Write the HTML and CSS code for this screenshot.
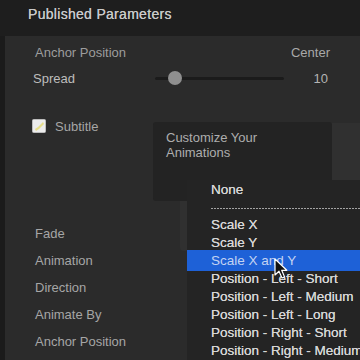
FILE: index.html
```html
<!DOCTYPE html>
<html lang="en">
<head>
  <meta charset="UTF-8" />
  <meta name="viewport" content="width=device-width, initial-scale=1" />
  <title>Published Parameters</title>
  <link rel="stylesheet" href="styles.css">
</head>
<body>
  <div class="panel">
    <header class="bar">
      <h1>Published Parameters</h1>
    </header>

    <main class="params">
      <div class="row">
        <span class="label dim">Anchor Position</span>
        <span class="value">Center</span>
      </div>
      <div class="row">
        <span class="label bright spread">Spread</span>
        <div class="slider"><span class="thumb"></span></div>
        <span class="value num">10</span>
      </div>
      <div class="row check-row">
        <svg class="check" width="14" height="14" viewBox="0 0 14 14">
          <rect x="0.5" y="0.5" width="13" height="13" rx="1" fill="#ececec" stroke="#bdbdbd" />
          <path d="M3 10 L6 8 L11 3 L12 5 L7 10 L4 12 Z" fill="#e4dc7a" opacity="0.85" />
        </svg>
        <span class="label">Subtitle</span>
      </div>

      <div class="group">
        <div class="row"><span class="label">Fade</span></div>
        <div class="row"><span class="label">Animation</span></div>
        <div class="row"><span class="label">Direction</span></div>
        <div class="row"><span class="label">Animate By</span></div>
        <div class="row"><span class="label">Anchor Position</span></div>
      </div>
    </main>

    <!-- popup button sitting under the tooltip and menu -->
    <div class="popup-bg"></div>

    <div class="tooltip">Customize Your<br>Animations</div>

    <ul class="menu">
      <li class="first">None</li>
      <li class="sep"></li>
      <li>Scale X</li>
      <li>Scale Y</li>
      <li class="active">Scale X and Y</li>
      <li>Position - Left - Short</li>
      <li>Position - Left - Medium</li>
      <li>Position - Left - Long</li>
      <li>Position - Right - Short</li>
      <li>Position - Right - Medium</li>
    </ul>

    <svg class="cursor" width="14" height="22" viewBox="0 0 14 22">
      <path d="M1 1 L1 17 L5 13.2 L8 20 L10.6 18.9 L7.7 12.3 L12.8 12.3 Z" fill="#111" stroke="#fff" stroke-width="1.2" stroke-linejoin="round" />
    </svg>
  </div>
</body>
</html>
```

FILE: styles.css
```css
* {
  box-sizing: border-box;
  margin: 0;
  padding: 0;
  font-family: 'Liberation Sans', Arial, sans-serif;
}

body {
  width: 360px;
  height: 360px;
  overflow: hidden;
  background: #2b2b2b;
}

.panel {
  position: relative;
  width: 360px;
  height: 360px;
  overflow: hidden;
  background: #2b2b2b;
}

.bar {
  height: 36px;
  background: #1e1e1e;
  padding-left: 28px;
}

.bar h1 {
  font-size: 14px;
  font-weight: normal;
  line-height: 28px;
  color: #c9c9c9;
  letter-spacing: 0.3px;
  text-shadow: 0 0 0.3px #c9c9c9;
}

.params {
  height: 324px;
  border-left: 5px solid #1b1b1b;
  padding: 3px 30px 0 30px;
}

.row {
  display: flex;
  align-items: center;
  height: 26px;
  font-size: 13px;
}

.label {
  color: #a6a6a6;
  white-space: nowrap;
}

.label.dim {
  color: #9d9d9d;
}

.label.bright {
  color: #bdbdbd;
}

.label.spread {
  flex: none;
  width: 122px;
  margin-left: -2px;
}

.value {
  flex: 1;
  text-align: right;
  color: #a9a9a9;
}

.value.num {
  padding-right: 2px;
  color: #b4b4b4;
}

.slider {
  position: relative;
  flex: none;
  width: 129px;
  height: 3px;
  background: #1b1b1b;
  border-radius: 2px;
}

.thumb {
  position: absolute;
  left: 13px;
  top: -6px;
  width: 14px;
  height: 14px;
  border-radius: 50%;
  background: #8f8f8f;
}

.check-row {
  margin-top: 22px;
  gap: 9px;
}

.check {
  margin-left: -3px;
  flex: none;
}

.group {
  margin-top: 81px;
}

.group .row {
  height: 27px;
}

.popup-bg {
  position: absolute;
  left: 180px;
  top: 123px;
  width: 190px;
  height: 128px;
  background: #303030;
  border-radius: 4px;
}

.tooltip {
  position: absolute;
  left: 153px;
  top: 122px;
  width: 179px;
  height: 79px;
  padding: 8px 13px;
  background: #232323;
  border-radius: 3px;
  color: #aeaeae;
  font-size: 13px;
  line-height: 15px;
  z-index: 1;
}

.menu {
  position: absolute;
  left: 187px;
  top: 180px;
  width: 190px;
  height: 200px;
  list-style: none;
  background: #242424;
  z-index: 2;
}

.menu li {
  height: 18px;
  line-height: 18px;
  padding-left: 24px;
  font-size: 13.5px;
  color: #d6d6d6;
  white-space: nowrap;
  text-shadow: 0 0 0.3px #d6d6d6;
}

.menu li.first {
  height: 20px;
  line-height: 20px;
}

.menu li.sep {
  height: 16px;
  padding: 0;
  margin-left: 24px;
  background: repeating-linear-gradient(to right, #a3a3a3 0 2px, transparent 2px 3px) 0 8px / 100% 1px no-repeat;
}

.menu li.active {
  background: #1e61d7;
  color: #c3d3f2;
  text-shadow: none;
  box-shadow: 0 -2px 0 #1e61d7, 0 1px 0 #1e61d7;
}

.cursor {
  position: absolute;
  left: 274px;
  top: 258px;
  z-index: 3;
}
```
